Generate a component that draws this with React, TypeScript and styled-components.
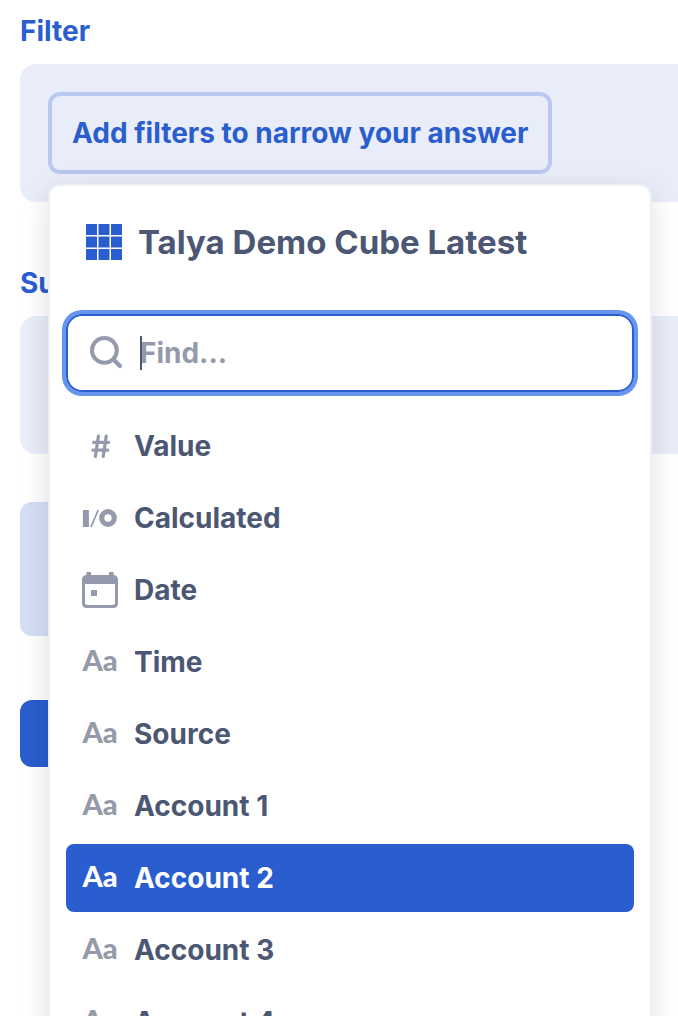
import React, { useState } from "react";
import styled, { createGlobalStyle } from "styled-components";

const color = {
  brand: "#2a5dce",
  panel: "#e9edf9",
  outline: "#b9c8f0",
  soft: "#d4dff6",
  text: "#4c5773",
  muted: "#949aab",
  ring: "#6595ee",
  line: "#edf0f3",
};

const GlobalStyle = createGlobalStyle`
  *, *::before, *::after { box-sizing: border-box; }
  body {
    margin: 0;
    background: #fff;
    font-family: Inter, "Liberation Sans", sans-serif;
    font-weight: 700;
    font-size: 28px;
    line-height: 34px;
    color: ${color.text};
  }
  button, input { font: inherit; color: inherit; }
`;

const Page = styled.main`
  height: 100vh;
  overflow: hidden;
  padding: 14px 0 0 20px;
`;

const Section = styled.section<{ $gap: number }>`
  position: relative;
  margin-bottom: ${(p) => p.$gap}px;
`;

const SectionTitle = styled.h2`
  margin: 0 0 16px;
  font-size: 28px;
  font-weight: 700;
  color: ${color.brand};
`;

const Panel = styled.div`
  min-height: 138px;
  padding: 28px;
  border-radius: 16px 0 0 16px;
  background: ${color.panel};
`;

const AddFilterButton = styled.button`
  height: 82px;
  padding: 0 20px;
  border: 4px solid ${color.outline};
  border-radius: 12px;
  background: transparent;
  color: ${color.brand};
  white-space: nowrap;
`;

const ActionButton = styled.button<{ $primary?: boolean }>`
  display: block;
  width: 160px;
  height: ${(p) => (p.$primary ? 67 : 134)}px;
  margin-bottom: 64px;
  border: 0;
  border-radius: 12px;
  background: ${(p) => (p.$primary ? color.brand : color.soft)};
`;

const Popover = styled.div`
  position: absolute;
  z-index: 1;
  top: 170px;
  left: 28px;
  width: calc(100% - 54px);
  max-width: 604px;
  padding: 0 16px;
  border: 2px solid ${color.line};
  border-radius: 12px;
  background: #fff;
  box-shadow: 0 8px 28px rgba(0, 0, 0, 0.13);
`;

const PopoverHeader = styled.header`
  display: flex;
  align-items: center;
  gap: 16px;
  padding: 36px 20px 52px;
`;

const PopoverTitle = styled.h3`
  margin: 0;
  font-size: 33px;
  font-weight: 700;
  line-height: 40px;
  white-space: nowrap;
`;

const SearchBox = styled.label`
  display: flex;
  align-items: center;
  gap: 16px;
  height: 78px;
  padding: 0 20px;
  border: 2px solid ${color.brand};
  border-radius: 16px;
  box-shadow: 0 0 0 4px ${color.ring};
  color: ${color.muted};
`;

const SearchField = styled.span`
  position: relative;
  flex: 1;
  display: flex;

  &::before {
    content: "";
    position: absolute;
    left: 0;
    top: 0;
    width: 2px;
    height: 34px;
    background: ${color.text};
  }
`;

const SearchInput = styled.input`
  width: 100%;
  height: 34px;
  padding: 0;
  border: 0;
  outline: 0;
  background: transparent;
  color: ${color.text};
  caret-color: transparent;

  &::placeholder { color: ${color.muted}; opacity: 1; }
`;

const FieldList = styled.ul`
  display: flex;
  flex-direction: column;
  gap: 4px;
  margin: 20px 0;
  padding: 0;
  list-style: none;
`;

const FieldButton = styled.button<{ $active: boolean }>`
  display: flex;
  align-items: center;
  gap: 16px;
  width: 100%;
  height: 68px;
  padding: 0 16px;
  border: 0;
  border-radius: 8px;
  text-align: left;
  background: ${(p) => (p.$active ? color.brand : "transparent")};
  color: ${(p) => (p.$active ? "#fff" : color.text)};
`;

const FieldIcon = styled.span<{ $active: boolean }>`
  display: flex;
  justify-content: center;
  align-items: center;
  flex: none;
  width: 36px;
  height: 36px;
  color: ${(p) => (p.$active ? "#fff" : color.muted)};
`;

const TextGlyph = styled.span`
  padding-bottom: 4px;
  font-family: Lato, sans-serif;
  font-size: 29px;
  font-weight: 900;
  line-height: 32px;
`;

const GridIcon = () => (
  <svg width="36" height="36" viewBox="0 0 36 36" fill={color.brand} aria-hidden="true">
    {[0, 12.5, 25].map((y) =>
      [0, 12.5, 25].map((x) => <rect key={`${x}-${y}`} x={x} y={y} width="11" height="11" />)
    )}
  </svg>
);

const SearchIcon = () => (
  <svg width="36" height="36" viewBox="0 0 36 36" fill="none" stroke="currentColor" aria-hidden="true">
    <circle cx="16.4" cy="15.4" r="12.4" strokeWidth="4" />
    <path d="M25.5 24.5 32 31" strokeWidth="4.2" strokeLinecap="round" />
  </svg>
);

const NumberIcon = () => (
  <svg width="36" height="36" viewBox="0 0 36 36" fill="none" stroke="currentColor" strokeWidth="3.2" strokeLinecap="round" aria-hidden="true">
    <path d="M16.4 8.2 13.4 28.4M24.2 8.2 21.2 28.4M11.7 14.4H26.6M10.9 22.2H25.8" />
  </svg>
);

const CalculatedIcon = () => (
  <svg width="36" height="36" viewBox="0 0 36 36" fill="none" stroke="currentColor" aria-hidden="true">
    <path d="M3.9 10V27" strokeWidth="6" />
    <path d="M16.2 10 9 27" strokeWidth="1.8" />
    <circle cx="26" cy="18" r="6.3" strokeWidth="5.2" />
  </svg>
);

const CalendarIcon = () => (
  <svg width="36" height="36" viewBox="0 0 36 36" fill="currentColor" aria-hidden="true">
    <path
      fillRule="evenodd"
      d="M4.5 0h4.5v3h18V0h4.5v3A4.5 4.5 0 0 1 36 7.5v24A4.5 4.5 0 0 1 31.5 36h-27A4.5 4.5 0 0 1 0 31.5v-24A4.5 4.5 0 0 1 4.5 3zM3 12v18.5A2.5 2.5 0 0 0 5.5 33h25a2.5 2.5 0 0 0 2.5-2.5V12zM9 18h6v6H9z"
    />
  </svg>
);

type Kind = "number" | "calculated" | "date" | "text";

const icons: Record<Kind, React.ReactNode> = {
  number: <NumberIcon />,
  calculated: <CalculatedIcon />,
  date: <CalendarIcon />,
  text: <TextGlyph aria-hidden="true">Aa</TextGlyph>,
};

const fields: { name: string; kind: Kind }[] = [
  { name: "Value", kind: "number" },
  { name: "Calculated", kind: "calculated" },
  { name: "Date", kind: "date" },
  { name: "Time", kind: "text" },
  { name: "Source", kind: "text" },
  { name: "Account 1", kind: "text" },
  { name: "Account 2", kind: "text" },
  { name: "Account 3", kind: "text" },
  { name: "Account 4", kind: "text" },
];

export default function App() {
  const [active, setActive] = useState("Account 2");
  const [query, setQuery] = useState("");
  const shown = fields.filter((f) => f.name.toLowerCase().includes(query.toLowerCase()));

  return (
    <>
      <GlobalStyle />
      <Page>
        <Section $gap={64}>
          <SectionTitle>Filter</SectionTitle>
          <Panel>
            <AddFilterButton type="button">Add filters to narrow your answer</AddFilterButton>
          </Panel>
          <Popover>
            <PopoverHeader>
              <GridIcon />
              <PopoverTitle>Talya Demo Cube Latest</PopoverTitle>
            </PopoverHeader>
            <SearchBox>
              <SearchIcon />
              <SearchField>
                <SearchInput
                  type="text"
                  aria-label="Find a field"
                  placeholder="Find..."
                  value={query}
                  onChange={(e) => setQuery(e.target.value)}
                />
              </SearchField>
            </SearchBox>
            <FieldList>
              {shown.map(({ name, kind }) => (
                <li key={name}>
                  <FieldButton type="button" $active={name === active} onMouseEnter={() => setActive(name)}>
                    <FieldIcon $active={name === active}>{icons[kind]}</FieldIcon>
                    {name}
                  </FieldButton>
                </li>
              ))}
            </FieldList>
          </Popover>
        </Section>
        <Section $gap={48}>
          <SectionTitle>Summarize</SectionTitle>
          <Panel />
        </Section>
        <ActionButton type="button" aria-label="Sort" />
        <ActionButton type="button" aria-label="Visualize" $primary />
      </Page>
    </>
  );
}
